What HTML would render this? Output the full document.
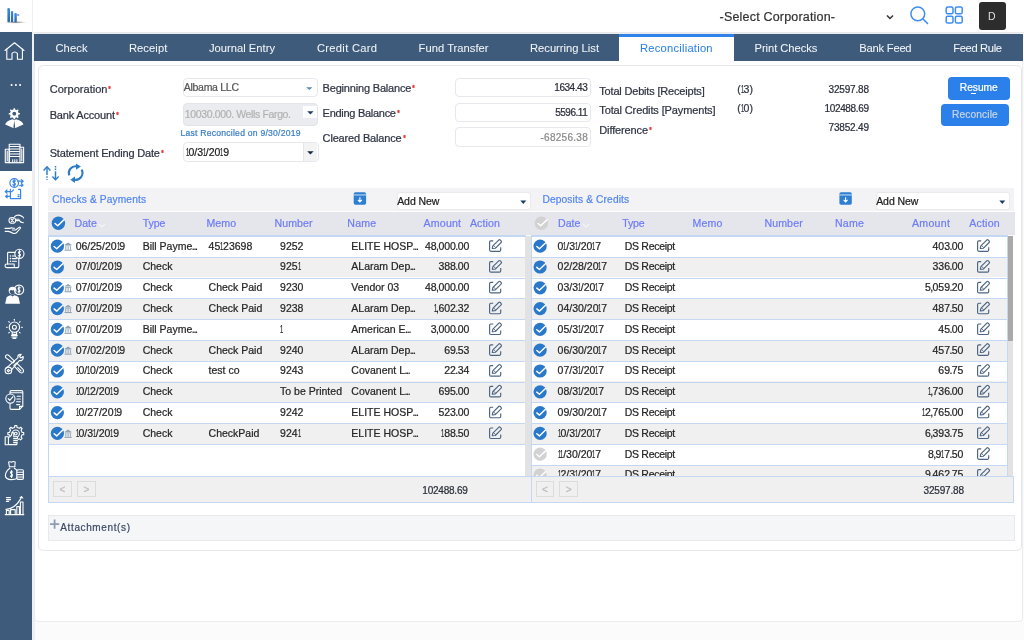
<!DOCTYPE html><html><head><meta charset="utf-8"><style>html,body{margin:0;padding:0;width:1024px;height:640px;overflow:hidden;background:#fff;font-family:"Liberation Sans", sans-serif;}.t{position:absolute;white-space:nowrap;line-height:1;-webkit-text-stroke-width:0.22px;}</style></head><body><div style="position:relative;width:1024px;height:640px;overflow:hidden;filter:blur(0.3px)"><div style="position:absolute;left:0px;top:0px;width:1024px;height:640px;background:#fbfbfb"></div><div style="position:absolute;left:0px;top:0px;width:1024px;height:33px;background:#fff;border-bottom:1px solid #e9e9ec;box-sizing:border-box"></div><div style="position:absolute;left:32px;top:0px;width:1px;height:32px;background:#f0f0f0"></div><div style="position:absolute;left:0px;top:32px;width:32px;height:608px;background:#3e5b7b"></div><div style="position:absolute;left:32px;top:32px;width:2.6000000000000014px;height:608px;background:#eeeff2"></div><div style="position:absolute;left:34.3px;top:32.6px;width:988.7px;height:589.6px;background:#fff;border:1px solid #ebecf0;border-radius:4px;box-sizing:border-box"></div><div style="position:absolute;left:34px;top:34px;width:989px;height:27px;background:#3e5b7b"></div><div style="position:absolute;left:619px;top:34px;width:115px;height:27px;background:#fff"></div><div style="position:absolute;left:619px;top:34px;width:115px;height:3px;background:#2f83e8"></div><div style="position:absolute;left:38px;top:65px;width:984px;height:486px;background:#fff;border:1px solid #e8e8e8;border-radius:5px;box-sizing:border-box"></div><svg style="position:absolute;left:0px;top:0px" width="32" height="32" viewBox="0 0 32 32">
<defs><linearGradient id="lg" x1="0" y1="0" x2="0" y2="1"><stop offset="0" stop-color="#3d8ee6"/><stop offset="1" stop-color="#2766a8"/></linearGradient>
<radialGradient id="sh"><stop offset="0" stop-color="#555" stop-opacity=".8"/><stop offset="1" stop-color="#888" stop-opacity="0"/></radialGradient></defs>
<ellipse cx="15.5" cy="22.3" rx="11.5" ry="1.4" fill="url(#sh)"/>
<rect x="7.4" y="8" width="2.6" height="14.2" rx="1.2" fill="url(#lg)"/>
<rect x="10.9" y="11" width="2.3" height="11.2" rx="1" fill="url(#lg)"/>
<rect x="14.4" y="13" width="2.4" height="9.2" rx="1" fill="url(#lg)"/>
<rect x="17" y="14" width="2.4" height="2" rx=".8" fill="#8f9cf0"/>
</svg><svg style="position:absolute;left:884px;top:12px" width="12" height="10" viewBox="0 0 12 10"><path d="M3 3.5 L6 6.5 L9 3.5" fill="none" stroke="#333" stroke-width="1.5"/></svg><svg style="position:absolute;left:906px;top:3px" width="26" height="26" viewBox="0 0 26 26"><circle cx="11.8" cy="10.8" r="6.9" fill="none" stroke="#3d8ef0" stroke-width="1.5"/><path d="M16.8 15.8 L21.5 20.5" stroke="#3d8ef0" stroke-width="1.6" stroke-linecap="round"/></svg><svg style="position:absolute;left:942px;top:3px" width="26" height="26" viewBox="0 0 26 26"><g fill="none" stroke="#3d8ef0" stroke-width="1.5">
<rect x="4.2" y="4" width="6.8" height="6.8" rx="1.6"/><rect x="13.4" y="4" width="6.8" height="6.8" rx="1.6"/>
<rect x="4.2" y="13.2" width="6.8" height="6.8" rx="1.6"/><rect x="13.4" y="13.2" width="6.8" height="6.8" rx="1.6"/></g></svg><div style="position:absolute;left:978.5px;top:2px;width:27.0px;height:27.5px;background:#2d2d2d;border-radius:3px"></div><div style="position:absolute;left:182.5px;top:77.8px;width:135.5px;height:19.700000000000003px;background:#fff;border:1px solid #e7e8ed;border-radius:4px;box-sizing:border-box"></div><svg style="position:absolute;left:306px;top:87px" width="7" height="4" viewBox="0 0 7 4"><path d="M0.2 0.2 L6.4 0.2 L3.3 3.1 Z" fill="#5a86b5"/></svg><div style="position:absolute;left:182.5px;top:102.5px;width:135.5px;height:23.0px;background:#ebecef;border:1px solid #e3e4e8;border-radius:4px;box-sizing:border-box"></div><div style="position:absolute;left:302.9px;top:105.6px;width:13.700000000000045px;height:12.5px;background:#fff"></div><svg style="position:absolute;left:306.8px;top:111px" width="7" height="4" viewBox="0 0 7 4"><path d="M0.2 0.2 L6.6 0.2 L3.4 3.4 Z" fill="#1f4060"/></svg><div style="position:absolute;left:182.5px;top:142px;width:136.0px;height:20.19999999999999px;background:#fff;border:1px solid #e7e8ed;border-radius:4px;box-sizing:border-box"></div><div style="position:absolute;left:303.4px;top:143px;width:14.100000000000023px;height:18.19999999999999px;background:#f3f3f4;border-left:1px solid #e6e6e6;box-sizing:border-box"></div><svg style="position:absolute;left:306.8px;top:150.5px" width="7" height="4" viewBox="0 0 7 4"><path d="M0.2 0.2 L6.6 0.2 L3.4 3.4 Z" fill="#152a40"/></svg><div style="position:absolute;left:455.4px;top:77.6px;width:135.60000000000002px;height:19.60000000000001px;background:#fff;border:1px solid #e7e8ed;border-radius:4px;box-sizing:border-box"></div><div style="position:absolute;left:455.4px;top:102.5px;width:135.60000000000002px;height:19.700000000000003px;background:#fff;border:1px solid #e7e8ed;border-radius:4px;box-sizing:border-box"></div><div style="position:absolute;left:455.4px;top:127.4px;width:135.60000000000002px;height:19.799999999999983px;background:#fff;border:1px solid #e7e8ed;border-radius:4px;box-sizing:border-box"></div><div style="position:absolute;left:948px;top:76.7px;width:61.5px;height:23.099999999999994px;background:#2b80ea;border-radius:4px"></div><div style="position:absolute;left:970.8px;top:92.6px;width:5.0px;height:0.8000000000000114px;background:#fff"></div><div style="position:absolute;left:940.8px;top:104px;width:67.90000000000009px;height:21.5px;background:#2b80ea;border-radius:4px"></div><svg style="position:absolute;left:40px;top:162px" width="48" height="22" viewBox="0 0 48 22"><g fill="none" stroke="#2e7cc6" stroke-width="1.45" stroke-linecap="butt">
<path d="M7 5 V17.8" stroke-dasharray="8 1.2 1.6 1.2 1.6 1.2 10"/><path d="M3.6 8.4 L7 4.8 L10.4 8.4"/>
<path d="M15.5 4 V17.8" stroke-dasharray="1.4 1.2 1.4 1.2 20"/><path d="M12.4 14.6 L15.5 17.7 L18.6 14.6"/></g>
<g fill="none" stroke="#2e7cc6" stroke-width="2.1">
<path d="M29.26 13.33 A6.8 6.8 0 0 1 36.6 4.3"/><path d="M41.54 7.6 A6.8 6.8 0 0 1 34.47 17.7"/></g>
<path d="M36 1.4 L40.9 4.6 L36 7.8 Z" fill="#2e7cc6"/><path d="M35 14.5 L30.3 17.7 L35 20.9 Z" fill="#2e7cc6"/>
</svg><div style="position:absolute;left:48px;top:188px;width:483px;height:23.19999999999999px;background:#f3f3f6"></div><div style="position:absolute;left:48px;top:212px;width:484px;height:23px;background:#e5e6eb"></div><div style="position:absolute;left:48px;top:235px;width:477.29999999999995px;height:241px;background:#fff"></div><div style="position:absolute;left:48px;top:235.8px;width:477.29999999999995px;height:20.80000000000001px;background:#fff"></div><div style="position:absolute;left:48px;top:256.6px;width:477.29999999999995px;height:20.80000000000001px;background:#f0f0f0"></div><div style="position:absolute;left:48px;top:277.40000000000003px;width:477.29999999999995px;height:20.80000000000001px;background:#fff"></div><div style="position:absolute;left:48px;top:298.20000000000005px;width:477.29999999999995px;height:20.80000000000001px;background:#f0f0f0"></div><div style="position:absolute;left:48px;top:319.0px;width:477.29999999999995px;height:20.80000000000001px;background:#fff"></div><div style="position:absolute;left:48px;top:339.8px;width:477.29999999999995px;height:20.80000000000001px;background:#f0f0f0"></div><div style="position:absolute;left:48px;top:360.6px;width:477.29999999999995px;height:20.80000000000001px;background:#fff"></div><div style="position:absolute;left:48px;top:381.4px;width:477.29999999999995px;height:20.80000000000001px;background:#f0f0f0"></div><div style="position:absolute;left:48px;top:402.20000000000005px;width:477.29999999999995px;height:20.80000000000001px;background:#fff"></div><div style="position:absolute;left:48px;top:423.0px;width:477.29999999999995px;height:20.80000000000001px;background:#f0f0f0"></div><div style="position:absolute;left:48px;top:256.70000000000005px;width:477.29999999999995px;height:1.1999999999999886px;background:#c4d8f3"></div><div style="position:absolute;left:48px;top:277.50000000000006px;width:477.29999999999995px;height:1.1999999999999886px;background:#c4d8f3"></div><div style="position:absolute;left:48px;top:298.30000000000007px;width:477.29999999999995px;height:1.1999999999999886px;background:#c4d8f3"></div><div style="position:absolute;left:48px;top:319.1000000000001px;width:477.29999999999995px;height:1.1999999999999886px;background:#c4d8f3"></div><div style="position:absolute;left:48px;top:339.90000000000003px;width:477.29999999999995px;height:1.1999999999999886px;background:#c4d8f3"></div><div style="position:absolute;left:48px;top:360.70000000000005px;width:477.29999999999995px;height:1.1999999999999886px;background:#c4d8f3"></div><div style="position:absolute;left:48px;top:381.50000000000006px;width:477.29999999999995px;height:1.1999999999999886px;background:#c4d8f3"></div><div style="position:absolute;left:48px;top:402.3px;width:477.29999999999995px;height:1.1999999999999886px;background:#c4d8f3"></div><div style="position:absolute;left:48px;top:423.1000000000001px;width:477.29999999999995px;height:1.1999999999999886px;background:#c4d8f3"></div><div style="position:absolute;left:48px;top:443.90000000000003px;width:477.29999999999995px;height:1.1999999999999886px;background:#c4d8f3"></div><div style="position:absolute;left:48px;top:235px;width:477.29999999999995px;height:1.8000000000000114px;background:#c4d8f3"></div><div style="position:absolute;left:524.8px;top:235px;width:1.0px;height:241px;background:#c4d8f3"></div><div style="position:absolute;left:525.3px;top:236px;width:5.5px;height:240px;background:#e2e2e2"></div><div style="position:absolute;left:48px;top:476px;width:483px;height:26.5px;background:#f0f0f0"></div><div style="position:absolute;left:48px;top:475.5px;width:483px;height:1.0px;background:#c4d8f3"></div><div style="position:absolute;left:48px;top:501.6px;width:483.5px;height:1.0px;background:#c4d8f3"></div><div style="position:absolute;left:48px;top:235px;width:1px;height:267.5px;background:#c4d8f3"></div><div style="position:absolute;left:530.5px;top:476px;width:1.0px;height:26.5px;background:#c4d8f3"></div><div style="position:absolute;left:53.3px;top:481px;width:18.5px;height:16.399999999999977px;border:1px solid #dcdcdc;box-sizing:border-box;background:#f0f0f0"></div><div style="position:absolute;left:77.2px;top:481px;width:18.5px;height:16.399999999999977px;border:1px solid #dcdcdc;box-sizing:border-box;background:#f0f0f0"></div><div style="position:absolute;left:396.6px;top:192px;width:134.5px;height:18.400000000000006px;background:#fff;border:1px solid #e9e9ec;border-radius:3px;box-sizing:border-box"></div><svg style="position:absolute;left:519.6px;top:200px" width="7" height="5" viewBox="0 0 7 5"><path d="M0.3 0.5 L6.3 0.5 L3.3 4 Z" fill="#1f3d63"/></svg><div style="position:absolute;left:531px;top:188px;width:482.70000000000005px;height:23.19999999999999px;background:#f3f3f6"></div><div style="position:absolute;left:531px;top:212px;width:483.70000000000005px;height:23px;background:#e5e6eb"></div><div style="position:absolute;left:531px;top:235px;width:476.4px;height:241px;background:#fff"></div><div style="position:absolute;left:531px;top:235.8px;width:476.4px;height:20.80000000000001px;background:#fff"></div><div style="position:absolute;left:531px;top:256.6px;width:476.4px;height:20.80000000000001px;background:#f0f0f0"></div><div style="position:absolute;left:531px;top:277.40000000000003px;width:476.4px;height:20.80000000000001px;background:#fff"></div><div style="position:absolute;left:531px;top:298.20000000000005px;width:476.4px;height:20.80000000000001px;background:#f0f0f0"></div><div style="position:absolute;left:531px;top:319.0px;width:476.4px;height:20.80000000000001px;background:#fff"></div><div style="position:absolute;left:531px;top:339.8px;width:476.4px;height:20.80000000000001px;background:#f0f0f0"></div><div style="position:absolute;left:531px;top:360.6px;width:476.4px;height:20.80000000000001px;background:#fff"></div><div style="position:absolute;left:531px;top:381.4px;width:476.4px;height:20.80000000000001px;background:#f0f0f0"></div><div style="position:absolute;left:531px;top:402.20000000000005px;width:476.4px;height:20.80000000000001px;background:#fff"></div><div style="position:absolute;left:531px;top:423.0px;width:476.4px;height:20.80000000000001px;background:#f0f0f0"></div><div style="position:absolute;left:531px;top:443.8px;width:476.4px;height:20.80000000000001px;background:#fff"></div><div style="position:absolute;left:531px;top:464.6px;width:476.4px;height:11.399999999999977px;background:#f0f0f0"></div><div style="position:absolute;left:531px;top:256.70000000000005px;width:476.4px;height:1.1999999999999886px;background:#c4d8f3"></div><div style="position:absolute;left:531px;top:277.50000000000006px;width:476.4px;height:1.1999999999999886px;background:#c4d8f3"></div><div style="position:absolute;left:531px;top:298.30000000000007px;width:476.4px;height:1.1999999999999886px;background:#c4d8f3"></div><div style="position:absolute;left:531px;top:319.1000000000001px;width:476.4px;height:1.1999999999999886px;background:#c4d8f3"></div><div style="position:absolute;left:531px;top:339.90000000000003px;width:476.4px;height:1.1999999999999886px;background:#c4d8f3"></div><div style="position:absolute;left:531px;top:360.70000000000005px;width:476.4px;height:1.1999999999999886px;background:#c4d8f3"></div><div style="position:absolute;left:531px;top:381.50000000000006px;width:476.4px;height:1.1999999999999886px;background:#c4d8f3"></div><div style="position:absolute;left:531px;top:402.3px;width:476.4px;height:1.1999999999999886px;background:#c4d8f3"></div><div style="position:absolute;left:531px;top:423.1000000000001px;width:476.4px;height:1.1999999999999886px;background:#c4d8f3"></div><div style="position:absolute;left:531px;top:443.90000000000003px;width:476.4px;height:1.1999999999999886px;background:#c4d8f3"></div><div style="position:absolute;left:531px;top:464.70000000000005px;width:476.4px;height:1.1999999999999886px;background:#c4d8f3"></div><div style="position:absolute;left:531px;top:235px;width:476.4px;height:1.8000000000000114px;background:#c4d8f3"></div><div style="position:absolute;left:1006.9px;top:235px;width:1.0px;height:241px;background:#c4d8f3"></div><div style="position:absolute;left:1007.6px;top:236px;width:5.0px;height:240px;background:#e2e2e2"></div><div style="position:absolute;left:1007.6px;top:236px;width:5.0px;height:105.30000000000001px;background:#a9a9a9"></div><div style="position:absolute;left:531px;top:476px;width:482.70000000000005px;height:26.5px;background:#f0f0f0"></div><div style="position:absolute;left:531px;top:475.5px;width:482.70000000000005px;height:1.0px;background:#c4d8f3"></div><div style="position:absolute;left:531px;top:501.6px;width:483.20000000000005px;height:1.0px;background:#c4d8f3"></div><div style="position:absolute;left:531px;top:235px;width:1px;height:267.5px;background:#c4d8f3"></div><div style="position:absolute;left:1013.2px;top:476px;width:1.0px;height:26.5px;background:#c4d8f3"></div><div style="position:absolute;left:535.8px;top:481px;width:18.5px;height:16.399999999999977px;border:1px solid #dcdcdc;box-sizing:border-box;background:#f0f0f0"></div><div style="position:absolute;left:559.4px;top:481px;width:18.5px;height:16.399999999999977px;border:1px solid #dcdcdc;box-sizing:border-box;background:#f0f0f0"></div><div style="position:absolute;left:875.6px;top:192px;width:134.5px;height:18.400000000000006px;background:#fff;border:1px solid #e9e9ec;border-radius:3px;box-sizing:border-box"></div><svg style="position:absolute;left:998.6px;top:200px" width="7" height="5" viewBox="0 0 7 5"><path d="M0.3 0.5 L6.3 0.5 L3.3 4 Z" fill="#1f3d63"/></svg><svg style="position:absolute;left:98.2px;top:222.5px" width="8" height="6" viewBox="0 0 8 6"><path d="M1 1 L4 4 L7 1" fill="none" stroke="#f4f5f8" stroke-width="1.1"/></svg><svg style="position:absolute;left:581.8px;top:222.5px" width="8" height="6" viewBox="0 0 8 6"><path d="M1 1 L4 4 L7 1" fill="none" stroke="#f4f5f8" stroke-width="1.1"/></svg><div style="position:absolute;left:48px;top:514.9px;width:966.8px;height:26.300000000000068px;background:#f5f6f8;border:1px solid #e8e9ec;box-sizing:border-box"></div><svg style="position:absolute;left:49px;top:519px" width="12" height="12" viewBox="0 0 12 12"><path d="M5.6 0.6 V9.8 M1 5.2 H10.2" stroke="#8d9bb2" stroke-width="1.8"/></svg><div style="position:absolute;left:0px;top:170.8px;width:32px;height:35.5px;background:#fff"></div><div class="t" style="top:11.00px;font-size:12.5px;color:#333;letter-spacing:0.186px;left:719.60px;">-Select Corporation-</div><div class="t" style="top:11.00px;font-size:10.5px;color:#e0e0e0;left:691.80px;width:600px;text-align:center;-webkit-text-stroke-width:0;">D</div><div class="t" style="top:43.00px;font-size:11.2px;color:#f2f4f7;letter-spacing:0.120px;left:55.40px;-webkit-text-stroke-width:0.05px;">Check</div><div class="t" style="top:43.00px;font-size:11.2px;color:#f2f4f7;letter-spacing:0.077px;left:128.90px;-webkit-text-stroke-width:0.05px;">Receipt</div><div class="t" style="top:43.00px;font-size:11.2px;color:#f2f4f7;letter-spacing:0.007px;left:209.00px;-webkit-text-stroke-width:0.05px;">Journal Entry</div><div class="t" style="top:43.00px;font-size:11.2px;color:#f2f4f7;letter-spacing:0.280px;left:317.00px;-webkit-text-stroke-width:0.05px;">Credit Card</div><div class="t" style="top:43.00px;font-size:11.2px;color:#f2f4f7;letter-spacing:0.029px;left:418.60px;-webkit-text-stroke-width:0.05px;">Fund Transfer</div><div class="t" style="top:43.00px;font-size:11.2px;color:#f2f4f7;left:530.00px;-webkit-text-stroke-width:0.05px;">Recurring List</div><div class="t" style="top:43.00px;font-size:11.2px;color:#2f83e8;letter-spacing:0.226px;left:640.00px;-webkit-text-stroke-width:0.05px;">Reconciliation</div><div class="t" style="top:43.00px;font-size:11.2px;color:#f2f4f7;letter-spacing:-0.047px;left:754.50px;-webkit-text-stroke-width:0.05px;">Print Checks</div><div class="t" style="top:43.00px;font-size:11.2px;color:#f2f4f7;letter-spacing:-0.226px;left:859.30px;-webkit-text-stroke-width:0.05px;">Bank Feed</div><div class="t" style="top:43.00px;font-size:11.2px;color:#f2f4f7;letter-spacing:-0.353px;left:953.20px;-webkit-text-stroke-width:0.05px;">Feed Rule</div><div class="t" style="top:84.00px;font-size:11px;color:#2e3443;letter-spacing:0.032px;left:49.70px;">Corporation</div><div class="t" style="top:110.00px;font-size:11px;color:#2e3443;letter-spacing:-0.180px;left:49.70px;">Bank Account</div><div class="t" style="top:148.00px;font-size:11px;color:#2e3443;letter-spacing:-0.173px;left:49.70px;">Statement Ending Date</div><div class="t" style="top:83.00px;font-size:11px;color:#2e3443;letter-spacing:-0.184px;left:322.60px;">Beginning Balance</div><div class="t" style="top:108.00px;font-size:11px;color:#2e3443;letter-spacing:-0.282px;left:322.60px;">Ending Balance</div><div class="t" style="top:133.00px;font-size:11px;color:#2e3443;letter-spacing:-0.160px;left:322.60px;">Cleared Balance</div><div class="t" style="top:86.00px;font-size:11px;color:#2e3443;letter-spacing:-0.184px;left:599.30px;">Total Debits [Receipts]</div><div class="t" style="top:105.00px;font-size:11px;color:#2e3443;letter-spacing:-0.131px;left:599.30px;">Total Credits [Payments]</div><div class="t" style="top:125.00px;font-size:11px;color:#2e3443;letter-spacing:-0.137px;left:599.30px;">Difference</div><div class="t" style="top:84.00px;font-size:10.5px;color:#2e3443;left:737.30px;">(<i style="font-style:normal;display:inline-block;width:2.79px;transform:scaleX(0.56);transform-origin:0 0">1</i>3)</div><div class="t" style="top:103.00px;font-size:10.5px;color:#2e3443;left:737.30px;">(<i style="font-style:normal;display:inline-block;width:2.79px;transform:scaleX(0.56);transform-origin:0 0">1</i>0)</div><div class="t" style="top:85.00px;font-size:10px;color:#2a2f3a;letter-spacing:-0.174px;right:155.17px;">32597.88</div><div class="t" style="top:104.00px;font-size:10px;color:#2a2f3a;letter-spacing:-0.348px;right:155.35px;">102488.69</div><div class="t" style="top:123.00px;font-size:10px;color:#2a2f3a;letter-spacing:-0.174px;right:155.17px;">73852.49</div><div class="t" style="top:82.00px;font-size:10.5px;color:#555;letter-spacing:-0.287px;left:183.80px;">Albama LLC</div><div class="t" style="top:109.00px;font-size:10.5px;color:#b3b3b3;letter-spacing:-0.364px;left:184.80px;">10030.000. Wells Fargo.</div><div class="t" style="top:129.00px;font-size:8.6px;color:#3b7fc7;letter-spacing:0.233px;left:180.50px;">Last Reconciled on 9/30/2019</div><div class="t" style="top:147.00px;font-size:10.5px;color:#222;left:185.60px;"><i style="font-style:normal;display:inline-block;width:2.79px;transform:scaleX(0.56);transform-origin:0 0">1</i>0/3<i style="font-style:normal;display:inline-block;width:2.79px;transform:scaleX(0.56);transform-origin:0 0">1</i>/20<i style="font-style:normal;display:inline-block;width:2.79px;transform:scaleX(0.56);transform-origin:0 0">1</i>9</div><div class="t" style="top:83.00px;font-size:10px;color:#2a2f3a;letter-spacing:-0.459px;right:436.76px;">1634.43</div><div class="t" style="top:108.00px;font-size:10px;color:#2a2f3a;letter-spacing:-0.484px;right:436.78px;">5596.11</div><div class="t" style="top:133.00px;font-size:10px;color:#8a8a8a;letter-spacing:0.269px;right:436.03px;">-68256.38</div><div class="t" style="top:83.00px;font-size:10.2px;color:#fff;letter-spacing:-0.008px;left:959.80px;">Resume</div><div class="t" style="top:110.00px;font-size:10.2px;color:#c9d3e3;letter-spacing:0.119px;left:952.00px;">Reconcile</div><div class="t" style="top:485.00px;font-size:10px;color:#bbb;left:-237.50px;width:600px;text-align:center;">&lt;</div><div class="t" style="top:485.00px;font-size:10px;color:#bbb;left:-213.60px;width:600px;text-align:center;">&gt;</div><div class="t" style="top:486.00px;font-size:10px;color:#2a2f3a;letter-spacing:-0.223px;right:556.42px;">102488.69</div><div class="t" style="top:195.00px;font-size:10.2px;color:#5487f2;letter-spacing:0.123px;left:52.30px;">Checks &amp; Payments</div><div class="t" style="top:196.00px;font-size:10.5px;color:#222;letter-spacing:-0.068px;left:397.20px;">Add New</div><div class="t" style="top:218.00px;font-size:10.6px;color:#6f7cf6;letter-spacing:-0.064px;left:74.60px;">Date</div><div class="t" style="top:218.00px;font-size:10.6px;color:#6f7cf6;letter-spacing:-0.090px;left:142.70px;">Type</div><div class="t" style="top:218.00px;font-size:10.6px;color:#6f7cf6;letter-spacing:0.121px;left:206.40px;">Memo</div><div class="t" style="top:218.00px;font-size:10.6px;color:#6f7cf6;letter-spacing:0.083px;left:274.50px;">Number</div><div class="t" style="top:218.00px;font-size:10.6px;color:#6f7cf6;letter-spacing:0.178px;left:347.30px;">Name</div><div class="t" style="top:218.00px;font-size:10.6px;color:#6f7cf6;letter-spacing:0.177px;left:423.60px;">Amount</div><div class="t" style="top:218.00px;font-size:10.6px;color:#6f7cf6;letter-spacing:0.089px;left:469.90px;">Action</div><div class="t" style="top:485.00px;font-size:10px;color:#bbb;left:245.00px;width:600px;text-align:center;">&lt;</div><div class="t" style="top:485.00px;font-size:10px;color:#bbb;left:268.60px;width:600px;text-align:center;">&gt;</div><div class="t" style="top:486.00px;font-size:10px;color:#2a2f3a;letter-spacing:-0.174px;right:60.17px;">32597.88</div><div class="t" style="top:195.00px;font-size:10.2px;color:#5487f2;letter-spacing:0.143px;left:542.40px;">Deposits &amp; Credits</div><div class="t" style="top:196.00px;font-size:10.5px;color:#222;letter-spacing:-0.068px;left:876.20px;">Add New</div><div class="t" style="top:218.00px;font-size:10.6px;color:#6f7cf6;letter-spacing:0.036px;left:558.00px;">Date</div><div class="t" style="top:218.00px;font-size:10.6px;color:#6f7cf6;letter-spacing:-0.190px;left:622.30px;">Type</div><div class="t" style="top:218.00px;font-size:10.6px;color:#6f7cf6;letter-spacing:0.188px;left:692.40px;">Memo</div><div class="t" style="top:218.00px;font-size:10.6px;color:#6f7cf6;letter-spacing:0.122px;left:764.40px;">Number</div><div class="t" style="top:218.00px;font-size:10.6px;color:#6f7cf6;letter-spacing:0.178px;left:835.00px;">Name</div><div class="t" style="top:218.00px;font-size:10.6px;color:#6f7cf6;letter-spacing:0.317px;left:911.90px;">Amount</div><div class="t" style="top:218.00px;font-size:10.6px;color:#6f7cf6;letter-spacing:0.209px;left:969.20px;">Action</div><div class="t" style="top:241.00px;font-size:10.5px;color:#262626;left:75.70px;">06/25/20<i style="font-style:normal;display:inline-block;width:2.79px;transform:scaleX(0.56);transform-origin:0 0">1</i>9</div><div class="t" style="top:241.00px;font-size:10.5px;color:#262626;left:142.70px;">Bill Payme<i style="font-style:normal;margin:0 -0.62px">.</i><i style="font-style:normal;margin:0 -0.62px">.</i><i style="font-style:normal;margin:0 -0.62px">.</i></div><div class="t" style="top:241.00px;font-size:10.5px;color:#262626;left:208.60px;">45<i style="font-style:normal;display:inline-block;width:2.79px;transform:scaleX(0.56);transform-origin:0 0">1</i>23698</div><div class="t" style="top:241.00px;font-size:10.5px;color:#262626;left:280.10px;">9252</div><div class="t" style="top:241.00px;font-size:10.5px;color:#262626;left:351.30px;">ELITE HOSP<i style="font-style:normal;margin:0 -0.62px">.</i><i style="font-style:normal;margin:0 -0.62px">.</i><i style="font-style:normal;margin:0 -0.62px">.</i></div><div class="t" style="top:241.00px;font-size:10.5px;color:#262626;right:554.70px;">48<i style="font-style:normal;margin:0 -0.62px">,</i>000<i style="font-style:normal;margin:0 -0.62px">.</i>00</div><div class="t" style="top:261.00px;font-size:10.5px;color:#262626;left:75.70px;">07/0<i style="font-style:normal;display:inline-block;width:2.79px;transform:scaleX(0.56);transform-origin:0 0">1</i>/20<i style="font-style:normal;display:inline-block;width:2.79px;transform:scaleX(0.56);transform-origin:0 0">1</i>9</div><div class="t" style="top:261.00px;font-size:10.5px;color:#262626;left:142.70px;">Check</div><div class="t" style="top:261.00px;font-size:10.5px;color:#262626;left:280.10px;">925<i style="font-style:normal;display:inline-block;width:2.79px;transform:scaleX(0.56);transform-origin:0 0">1</i></div><div class="t" style="top:261.00px;font-size:10.5px;color:#262626;left:351.30px;">ALaram Dep<i style="font-style:normal;margin:0 -0.62px">.</i><i style="font-style:normal;margin:0 -0.62px">.</i><i style="font-style:normal;margin:0 -0.62px">.</i></div><div class="t" style="top:261.00px;font-size:10.5px;color:#262626;right:554.70px;">388<i style="font-style:normal;margin:0 -0.62px">.</i>00</div><div class="t" style="top:282.00px;font-size:10.5px;color:#262626;left:75.70px;">07/0<i style="font-style:normal;display:inline-block;width:2.79px;transform:scaleX(0.56);transform-origin:0 0">1</i>/20<i style="font-style:normal;display:inline-block;width:2.79px;transform:scaleX(0.56);transform-origin:0 0">1</i>9</div><div class="t" style="top:282.00px;font-size:10.5px;color:#262626;left:142.70px;">Check</div><div class="t" style="top:282.00px;font-size:10.5px;color:#262626;left:208.60px;">Check Paid</div><div class="t" style="top:282.00px;font-size:10.5px;color:#262626;left:280.10px;">9230</div><div class="t" style="top:282.00px;font-size:10.5px;color:#262626;left:351.30px;">Vendor 03</div><div class="t" style="top:282.00px;font-size:10.5px;color:#262626;right:554.70px;">48<i style="font-style:normal;margin:0 -0.62px">,</i>000<i style="font-style:normal;margin:0 -0.62px">.</i>00</div><div class="t" style="top:303.00px;font-size:10.5px;color:#262626;left:75.70px;">07/0<i style="font-style:normal;display:inline-block;width:2.79px;transform:scaleX(0.56);transform-origin:0 0">1</i>/20<i style="font-style:normal;display:inline-block;width:2.79px;transform:scaleX(0.56);transform-origin:0 0">1</i>9</div><div class="t" style="top:303.00px;font-size:10.5px;color:#262626;left:142.70px;">Check</div><div class="t" style="top:303.00px;font-size:10.5px;color:#262626;left:208.60px;">Check Paid</div><div class="t" style="top:303.00px;font-size:10.5px;color:#262626;left:280.10px;">9238</div><div class="t" style="top:303.00px;font-size:10.5px;color:#262626;left:351.30px;">ALaram Dep<i style="font-style:normal;margin:0 -0.62px">.</i><i style="font-style:normal;margin:0 -0.62px">.</i><i style="font-style:normal;margin:0 -0.62px">.</i></div><div class="t" style="top:303.00px;font-size:10.5px;color:#262626;right:554.70px;"><i style="font-style:normal;display:inline-block;width:2.79px;transform:scaleX(0.56);transform-origin:0 0">1</i><i style="font-style:normal;margin:0 -0.62px">,</i>602<i style="font-style:normal;margin:0 -0.62px">.</i>32</div><div class="t" style="top:324.00px;font-size:10.5px;color:#262626;left:75.70px;">07/0<i style="font-style:normal;display:inline-block;width:2.79px;transform:scaleX(0.56);transform-origin:0 0">1</i>/20<i style="font-style:normal;display:inline-block;width:2.79px;transform:scaleX(0.56);transform-origin:0 0">1</i>9</div><div class="t" style="top:324.00px;font-size:10.5px;color:#262626;left:142.70px;">Bill Payme<i style="font-style:normal;margin:0 -0.62px">.</i><i style="font-style:normal;margin:0 -0.62px">.</i><i style="font-style:normal;margin:0 -0.62px">.</i></div><div class="t" style="top:324.00px;font-size:10.5px;color:#262626;left:280.10px;"><i style="font-style:normal;display:inline-block;width:2.79px;transform:scaleX(0.56);transform-origin:0 0">1</i></div><div class="t" style="top:324.00px;font-size:10.5px;color:#262626;left:351.30px;">American E<i style="font-style:normal;margin:0 -0.62px">.</i><i style="font-style:normal;margin:0 -0.62px">.</i><i style="font-style:normal;margin:0 -0.62px">.</i></div><div class="t" style="top:324.00px;font-size:10.5px;color:#262626;right:554.70px;">3<i style="font-style:normal;margin:0 -0.62px">,</i>000<i style="font-style:normal;margin:0 -0.62px">.</i>00</div><div class="t" style="top:345.00px;font-size:10.5px;color:#262626;left:75.70px;">07/02/20<i style="font-style:normal;display:inline-block;width:2.79px;transform:scaleX(0.56);transform-origin:0 0">1</i>9</div><div class="t" style="top:345.00px;font-size:10.5px;color:#262626;left:142.70px;">Check</div><div class="t" style="top:345.00px;font-size:10.5px;color:#262626;left:208.60px;">Check Paid</div><div class="t" style="top:345.00px;font-size:10.5px;color:#262626;left:280.10px;">9240</div><div class="t" style="top:345.00px;font-size:10.5px;color:#262626;left:351.30px;">ALaram Dep<i style="font-style:normal;margin:0 -0.62px">.</i><i style="font-style:normal;margin:0 -0.62px">.</i><i style="font-style:normal;margin:0 -0.62px">.</i></div><div class="t" style="top:345.00px;font-size:10.5px;color:#262626;right:554.70px;">69<i style="font-style:normal;margin:0 -0.62px">.</i>53</div><div class="t" style="top:365.00px;font-size:10.5px;color:#262626;left:75.70px;"><i style="font-style:normal;display:inline-block;width:2.79px;transform:scaleX(0.56);transform-origin:0 0">1</i>0/<i style="font-style:normal;display:inline-block;width:2.79px;transform:scaleX(0.56);transform-origin:0 0">1</i>0/20<i style="font-style:normal;display:inline-block;width:2.79px;transform:scaleX(0.56);transform-origin:0 0">1</i>9</div><div class="t" style="top:365.00px;font-size:10.5px;color:#262626;left:142.70px;">Check</div><div class="t" style="top:365.00px;font-size:10.5px;color:#262626;left:208.60px;">test co</div><div class="t" style="top:365.00px;font-size:10.5px;color:#262626;left:280.10px;">9243</div><div class="t" style="top:365.00px;font-size:10.5px;color:#262626;left:351.30px;">Covanent L<i style="font-style:normal;margin:0 -0.62px">.</i><i style="font-style:normal;margin:0 -0.62px">.</i><i style="font-style:normal;margin:0 -0.62px">.</i></div><div class="t" style="top:365.00px;font-size:10.5px;color:#262626;right:554.70px;">22<i style="font-style:normal;margin:0 -0.62px">.</i>34</div><div class="t" style="top:386.00px;font-size:10.5px;color:#262626;left:75.70px;"><i style="font-style:normal;display:inline-block;width:2.79px;transform:scaleX(0.56);transform-origin:0 0">1</i>0/<i style="font-style:normal;display:inline-block;width:2.79px;transform:scaleX(0.56);transform-origin:0 0">1</i>2/20<i style="font-style:normal;display:inline-block;width:2.79px;transform:scaleX(0.56);transform-origin:0 0">1</i>9</div><div class="t" style="top:386.00px;font-size:10.5px;color:#262626;left:142.70px;">Check</div><div class="t" style="top:386.00px;font-size:10.5px;color:#262626;left:280.10px;">To be Printed</div><div class="t" style="top:386.00px;font-size:10.5px;color:#262626;left:351.30px;">Covanent L<i style="font-style:normal;margin:0 -0.62px">.</i><i style="font-style:normal;margin:0 -0.62px">.</i><i style="font-style:normal;margin:0 -0.62px">.</i></div><div class="t" style="top:386.00px;font-size:10.5px;color:#262626;right:554.70px;">695<i style="font-style:normal;margin:0 -0.62px">.</i>00</div><div class="t" style="top:407.00px;font-size:10.5px;color:#262626;left:75.70px;"><i style="font-style:normal;display:inline-block;width:2.79px;transform:scaleX(0.56);transform-origin:0 0">1</i>0/27/20<i style="font-style:normal;display:inline-block;width:2.79px;transform:scaleX(0.56);transform-origin:0 0">1</i>9</div><div class="t" style="top:407.00px;font-size:10.5px;color:#262626;left:142.70px;">Check</div><div class="t" style="top:407.00px;font-size:10.5px;color:#262626;left:280.10px;">9242</div><div class="t" style="top:407.00px;font-size:10.5px;color:#262626;left:351.30px;">ELITE HOSP<i style="font-style:normal;margin:0 -0.62px">.</i><i style="font-style:normal;margin:0 -0.62px">.</i><i style="font-style:normal;margin:0 -0.62px">.</i></div><div class="t" style="top:407.00px;font-size:10.5px;color:#262626;right:554.70px;">523<i style="font-style:normal;margin:0 -0.62px">.</i>00</div><div class="t" style="top:428.00px;font-size:10.5px;color:#262626;left:75.70px;"><i style="font-style:normal;display:inline-block;width:2.79px;transform:scaleX(0.56);transform-origin:0 0">1</i>0/3<i style="font-style:normal;display:inline-block;width:2.79px;transform:scaleX(0.56);transform-origin:0 0">1</i>/20<i style="font-style:normal;display:inline-block;width:2.79px;transform:scaleX(0.56);transform-origin:0 0">1</i>9</div><div class="t" style="top:428.00px;font-size:10.5px;color:#262626;left:142.70px;">Check</div><div class="t" style="top:428.00px;font-size:10.5px;color:#262626;left:208.60px;">CheckPaid</div><div class="t" style="top:428.00px;font-size:10.5px;color:#262626;left:280.10px;">924<i style="font-style:normal;display:inline-block;width:2.79px;transform:scaleX(0.56);transform-origin:0 0">1</i></div><div class="t" style="top:428.00px;font-size:10.5px;color:#262626;left:351.30px;">ELITE HOSP<i style="font-style:normal;margin:0 -0.62px">.</i><i style="font-style:normal;margin:0 -0.62px">.</i><i style="font-style:normal;margin:0 -0.62px">.</i></div><div class="t" style="top:428.00px;font-size:10.5px;color:#262626;right:554.70px;"><i style="font-style:normal;display:inline-block;width:2.79px;transform:scaleX(0.56);transform-origin:0 0">1</i>88<i style="font-style:normal;margin:0 -0.62px">.</i>50</div><div class="t" style="top:241.00px;font-size:10.5px;color:#262626;left:557.60px;">0<i style="font-style:normal;display:inline-block;width:2.79px;transform:scaleX(0.56);transform-origin:0 0">1</i>/3<i style="font-style:normal;display:inline-block;width:2.79px;transform:scaleX(0.56);transform-origin:0 0">1</i>/20<i style="font-style:normal;display:inline-block;width:2.79px;transform:scaleX(0.56);transform-origin:0 0">1</i>7</div><div class="t" style="top:241.00px;font-size:10.5px;color:#262626;letter-spacing:-0.279px;left:624.70px;">DS Receipt</div><div class="t" style="top:241.00px;font-size:10.5px;color:#262626;right:60.60px;">403<i style="font-style:normal;margin:0 -0.62px">.</i>00</div><div class="t" style="top:261.00px;font-size:10.5px;color:#262626;left:557.60px;">02/28/20<i style="font-style:normal;display:inline-block;width:2.79px;transform:scaleX(0.56);transform-origin:0 0">1</i>7</div><div class="t" style="top:261.00px;font-size:10.5px;color:#262626;letter-spacing:-0.279px;left:624.70px;">DS Receipt</div><div class="t" style="top:261.00px;font-size:10.5px;color:#262626;right:60.60px;">336<i style="font-style:normal;margin:0 -0.62px">.</i>00</div><div class="t" style="top:282.00px;font-size:10.5px;color:#262626;left:557.60px;">03/3<i style="font-style:normal;display:inline-block;width:2.79px;transform:scaleX(0.56);transform-origin:0 0">1</i>/20<i style="font-style:normal;display:inline-block;width:2.79px;transform:scaleX(0.56);transform-origin:0 0">1</i>7</div><div class="t" style="top:282.00px;font-size:10.5px;color:#262626;letter-spacing:-0.279px;left:624.70px;">DS Receipt</div><div class="t" style="top:282.00px;font-size:10.5px;color:#262626;right:60.60px;">5<i style="font-style:normal;margin:0 -0.62px">,</i>059<i style="font-style:normal;margin:0 -0.62px">.</i>20</div><div class="t" style="top:303.00px;font-size:10.5px;color:#262626;left:557.60px;">04/30/20<i style="font-style:normal;display:inline-block;width:2.79px;transform:scaleX(0.56);transform-origin:0 0">1</i>7</div><div class="t" style="top:303.00px;font-size:10.5px;color:#262626;letter-spacing:-0.279px;left:624.70px;">DS Receipt</div><div class="t" style="top:303.00px;font-size:10.5px;color:#262626;right:60.60px;">487<i style="font-style:normal;margin:0 -0.62px">.</i>50</div><div class="t" style="top:324.00px;font-size:10.5px;color:#262626;left:557.60px;">05/3<i style="font-style:normal;display:inline-block;width:2.79px;transform:scaleX(0.56);transform-origin:0 0">1</i>/20<i style="font-style:normal;display:inline-block;width:2.79px;transform:scaleX(0.56);transform-origin:0 0">1</i>7</div><div class="t" style="top:324.00px;font-size:10.5px;color:#262626;letter-spacing:-0.279px;left:624.70px;">DS Receipt</div><div class="t" style="top:324.00px;font-size:10.5px;color:#262626;right:60.60px;">45<i style="font-style:normal;margin:0 -0.62px">.</i>00</div><div class="t" style="top:345.00px;font-size:10.5px;color:#262626;left:557.60px;">06/30/20<i style="font-style:normal;display:inline-block;width:2.79px;transform:scaleX(0.56);transform-origin:0 0">1</i>7</div><div class="t" style="top:345.00px;font-size:10.5px;color:#262626;letter-spacing:-0.279px;left:624.70px;">DS Receipt</div><div class="t" style="top:345.00px;font-size:10.5px;color:#262626;right:60.60px;">457<i style="font-style:normal;margin:0 -0.62px">.</i>50</div><div class="t" style="top:365.00px;font-size:10.5px;color:#262626;left:557.60px;">07/3<i style="font-style:normal;display:inline-block;width:2.79px;transform:scaleX(0.56);transform-origin:0 0">1</i>/20<i style="font-style:normal;display:inline-block;width:2.79px;transform:scaleX(0.56);transform-origin:0 0">1</i>7</div><div class="t" style="top:365.00px;font-size:10.5px;color:#262626;letter-spacing:-0.279px;left:624.70px;">DS Receipt</div><div class="t" style="top:365.00px;font-size:10.5px;color:#262626;right:60.60px;">69<i style="font-style:normal;margin:0 -0.62px">.</i>75</div><div class="t" style="top:386.00px;font-size:10.5px;color:#262626;left:557.60px;">08/3<i style="font-style:normal;display:inline-block;width:2.79px;transform:scaleX(0.56);transform-origin:0 0">1</i>/20<i style="font-style:normal;display:inline-block;width:2.79px;transform:scaleX(0.56);transform-origin:0 0">1</i>7</div><div class="t" style="top:386.00px;font-size:10.5px;color:#262626;letter-spacing:-0.279px;left:624.70px;">DS Receipt</div><div class="t" style="top:386.00px;font-size:10.5px;color:#262626;right:60.60px;"><i style="font-style:normal;display:inline-block;width:2.79px;transform:scaleX(0.56);transform-origin:0 0">1</i><i style="font-style:normal;margin:0 -0.62px">,</i>736<i style="font-style:normal;margin:0 -0.62px">.</i>00</div><div class="t" style="top:407.00px;font-size:10.5px;color:#262626;left:557.60px;">09/30/20<i style="font-style:normal;display:inline-block;width:2.79px;transform:scaleX(0.56);transform-origin:0 0">1</i>7</div><div class="t" style="top:407.00px;font-size:10.5px;color:#262626;letter-spacing:-0.279px;left:624.70px;">DS Receipt</div><div class="t" style="top:407.00px;font-size:10.5px;color:#262626;right:60.60px;"><i style="font-style:normal;display:inline-block;width:2.79px;transform:scaleX(0.56);transform-origin:0 0">1</i>2<i style="font-style:normal;margin:0 -0.62px">,</i>765<i style="font-style:normal;margin:0 -0.62px">.</i>00</div><div class="t" style="top:428.00px;font-size:10.5px;color:#262626;left:557.60px;"><i style="font-style:normal;display:inline-block;width:2.79px;transform:scaleX(0.56);transform-origin:0 0">1</i>0/3<i style="font-style:normal;display:inline-block;width:2.79px;transform:scaleX(0.56);transform-origin:0 0">1</i>/20<i style="font-style:normal;display:inline-block;width:2.79px;transform:scaleX(0.56);transform-origin:0 0">1</i>7</div><div class="t" style="top:428.00px;font-size:10.5px;color:#262626;letter-spacing:-0.279px;left:624.70px;">DS Receipt</div><div class="t" style="top:428.00px;font-size:10.5px;color:#262626;right:60.60px;">6<i style="font-style:normal;margin:0 -0.62px">,</i>393<i style="font-style:normal;margin:0 -0.62px">.</i>75</div><div class="t" style="top:449.00px;font-size:10.5px;color:#262626;left:557.60px;"><i style="font-style:normal;display:inline-block;width:2.79px;transform:scaleX(0.56);transform-origin:0 0">1</i><i style="font-style:normal;display:inline-block;width:2.79px;transform:scaleX(0.56);transform-origin:0 0">1</i>/30/20<i style="font-style:normal;display:inline-block;width:2.79px;transform:scaleX(0.56);transform-origin:0 0">1</i>7</div><div class="t" style="top:449.00px;font-size:10.5px;color:#262626;letter-spacing:-0.279px;left:624.70px;">DS Receipt</div><div class="t" style="top:449.00px;font-size:10.5px;color:#262626;right:60.60px;">8<i style="font-style:normal;margin:0 -0.62px">,</i>9<i style="font-style:normal;display:inline-block;width:2.79px;transform:scaleX(0.56);transform-origin:0 0">1</i>7<i style="font-style:normal;margin:0 -0.62px">.</i>50</div><div class="t" style="top:469.00px;font-size:10.5px;color:#262626;left:557.60px;clip-path:inset(0 0 3.50px 0);"><i style="font-style:normal;display:inline-block;width:2.79px;transform:scaleX(0.56);transform-origin:0 0">1</i>2/3<i style="font-style:normal;display:inline-block;width:2.79px;transform:scaleX(0.56);transform-origin:0 0">1</i>/20<i style="font-style:normal;display:inline-block;width:2.79px;transform:scaleX(0.56);transform-origin:0 0">1</i>7</div><div class="t" style="top:469.00px;font-size:10.5px;color:#262626;letter-spacing:-0.279px;left:624.70px;clip-path:inset(0 0 3.50px 0);">DS Receipt</div><div class="t" style="top:469.00px;font-size:10.5px;color:#262626;right:60.60px;clip-path:inset(0 0 3.50px 0);">9<i style="font-style:normal;margin:0 -0.62px">,</i>462<i style="font-style:normal;margin:0 -0.62px">.</i>75</div><div class="t" style="top:523.00px;font-size:10px;color:#3d4b66;letter-spacing:0.621px;left:60.30px;">Attachment(s)</div><svg style="position:absolute;left:107.40px;top:84.50px" width="5" height="5" viewBox="0 0 5 5"><path d="M2.5 0.9 V4.1 M1.1 1.7 L3.9 3.3 M1.1 3.3 L3.9 1.7" stroke="#ea3a35" stroke-width="0.95"/></svg><svg style="position:absolute;left:115.10px;top:110.55px" width="5" height="5" viewBox="0 0 5 5"><path d="M2.5 0.9 V4.1 M1.1 1.7 L3.9 3.3 M1.1 3.3 L3.9 1.7" stroke="#ea3a35" stroke-width="0.95"/></svg><svg style="position:absolute;left:160.00px;top:148.70px" width="5" height="5" viewBox="0 0 5 5"><path d="M2.5 0.9 V4.1 M1.1 1.7 L3.9 3.3 M1.1 3.3 L3.9 1.7" stroke="#ea3a35" stroke-width="0.95"/></svg><svg style="position:absolute;left:411.40px;top:83.80px" width="5" height="5" viewBox="0 0 5 5"><path d="M2.5 0.9 V4.1 M1.1 1.7 L3.9 3.3 M1.1 3.3 L3.9 1.7" stroke="#ea3a35" stroke-width="0.95"/></svg><svg style="position:absolute;left:396.00px;top:108.70px" width="5" height="5" viewBox="0 0 5 5"><path d="M2.5 0.9 V4.1 M1.1 1.7 L3.9 3.3 M1.1 3.3 L3.9 1.7" stroke="#ea3a35" stroke-width="0.95"/></svg><svg style="position:absolute;left:401.70px;top:133.60px" width="5" height="5" viewBox="0 0 5 5"><path d="M2.5 0.9 V4.1 M1.1 1.7 L3.9 3.3 M1.1 3.3 L3.9 1.7" stroke="#ea3a35" stroke-width="0.95"/></svg><svg style="position:absolute;left:648.00px;top:125.80px" width="5" height="5" viewBox="0 0 5 5"><path d="M2.5 0.9 V4.1 M1.1 1.7 L3.9 3.3 M1.1 3.3 L3.9 1.7" stroke="#ea3a35" stroke-width="0.95"/></svg><svg style="position:absolute;left:0;top:0" width="1024" height="640"><g transform="translate(353.7,192.3)"><rect x="0" y="0" width="12.4" height="12.4" rx="1.6" fill="#2e7fd1"/><rect x="0" y="2.2" width="12.4" height="0.9" fill="#fff" opacity=".85"/><path d="M6.2 5 V9.4 M4.2 7.6 L6.2 9.6 L8.2 7.6" stroke="#fff" stroke-width="1.1" fill="none"/></g><circle cx="58.4" cy="223.2" r="6.7" fill="#2a78c9"/><path d="M55.05 223.53 L57.73 225.75 L63.89 219.85" fill="none" stroke="#fff" stroke-width="1.47" stroke-linecap="round" stroke-linejoin="round"/></svg><svg style="position:absolute;left:0;top:0" width="1024" height="640"><g transform="translate(839.4,192.3)"><rect x="0" y="0" width="12.4" height="12.4" rx="1.6" fill="#2e7fd1"/><rect x="0" y="2.2" width="12.4" height="0.9" fill="#fff" opacity=".85"/><path d="M6.2 5 V9.4 M4.2 7.6 L6.2 9.6 L8.2 7.6" stroke="#fff" stroke-width="1.1" fill="none"/></g><circle cx="541.4" cy="223.2" r="6.7" fill="#d2d2d2"/><path d="M538.05 223.53 L540.73 225.75 L546.89 219.85" fill="none" stroke="#fff" stroke-width="1.47" stroke-linecap="round" stroke-linejoin="round"/></svg><svg style="position:absolute;left:0;top:0" width="1024" height="640"><defs><clipPath id="cb"><rect x="0" y="0" width="1024" height="476"/></clipPath></defs><g clip-path="url(#cb)"><circle cx="57.4" cy="246.2" r="6.6" fill="#2a78c9"/><path d="M54.10 246.53 L56.74 248.71 L62.81 242.90" fill="none" stroke="#fff" stroke-width="1.45" stroke-linecap="round" stroke-linejoin="round"/><g transform="translate(64.3,242.0)" fill="#8fa3b4"><path d="M0 3 L3.8 0.4 L7.6 3 Z"/><rect x="0.6" y="3.4" width="6.4" height="0.8"/><rect x="1" y="4.4" width="1" height="3"/><rect x="3.3" y="4.4" width="1" height="3"/><rect x="5.6" y="4.4" width="1" height="3"/><rect x="0.2" y="7.6" width="7.2" height="1.1"/></g><g transform="translate(489,239.2)" fill="none" stroke="#4c6483" stroke-width="1.15" stroke-linejoin="round"><path d="M4.2 1.6 H1.8 Q0.6 1.6 0.6 2.8 V10.9 Q0.6 12.1 1.8 12.1 H10.5 Q11.7 12.1 11.7 10.9 V8"/><path d="M3.3 9.3 L3.9 6.7 L9.7 0.9 Q10.5 0.1 11.3 0.9 L12.1 1.7 Q12.9 2.5 12.1 3.3 L6.3 9.1 Z"/><path d="M4.6 6.3 L6.7 8.4" stroke-width="0.9"/></g><circle cx="57.4" cy="267.0" r="6.6" fill="#2a78c9"/><path d="M54.10 267.33 L56.74 269.51 L62.81 263.70" fill="none" stroke="#fff" stroke-width="1.45" stroke-linecap="round" stroke-linejoin="round"/><g transform="translate(489,260.0)" fill="none" stroke="#4c6483" stroke-width="1.15" stroke-linejoin="round"><path d="M4.2 1.6 H1.8 Q0.6 1.6 0.6 2.8 V10.9 Q0.6 12.1 1.8 12.1 H10.5 Q11.7 12.1 11.7 10.9 V8"/><path d="M3.3 9.3 L3.9 6.7 L9.7 0.9 Q10.5 0.1 11.3 0.9 L12.1 1.7 Q12.9 2.5 12.1 3.3 L6.3 9.1 Z"/><path d="M4.6 6.3 L6.7 8.4" stroke-width="0.9"/></g><circle cx="57.4" cy="287.8" r="6.6" fill="#2a78c9"/><path d="M54.10 288.13 L56.74 290.31 L62.81 284.50" fill="none" stroke="#fff" stroke-width="1.45" stroke-linecap="round" stroke-linejoin="round"/><g transform="translate(64.3,283.6)" fill="#8fa3b4"><path d="M0 3 L3.8 0.4 L7.6 3 Z"/><rect x="0.6" y="3.4" width="6.4" height="0.8"/><rect x="1" y="4.4" width="1" height="3"/><rect x="3.3" y="4.4" width="1" height="3"/><rect x="5.6" y="4.4" width="1" height="3"/><rect x="0.2" y="7.6" width="7.2" height="1.1"/></g><g transform="translate(489,280.8)" fill="none" stroke="#4c6483" stroke-width="1.15" stroke-linejoin="round"><path d="M4.2 1.6 H1.8 Q0.6 1.6 0.6 2.8 V10.9 Q0.6 12.1 1.8 12.1 H10.5 Q11.7 12.1 11.7 10.9 V8"/><path d="M3.3 9.3 L3.9 6.7 L9.7 0.9 Q10.5 0.1 11.3 0.9 L12.1 1.7 Q12.9 2.5 12.1 3.3 L6.3 9.1 Z"/><path d="M4.6 6.3 L6.7 8.4" stroke-width="0.9"/></g><circle cx="57.4" cy="308.6" r="6.6" fill="#2a78c9"/><path d="M54.10 308.93 L56.74 311.11 L62.81 305.30" fill="none" stroke="#fff" stroke-width="1.45" stroke-linecap="round" stroke-linejoin="round"/><g transform="translate(64.3,304.40000000000003)" fill="#8fa3b4"><path d="M0 3 L3.8 0.4 L7.6 3 Z"/><rect x="0.6" y="3.4" width="6.4" height="0.8"/><rect x="1" y="4.4" width="1" height="3"/><rect x="3.3" y="4.4" width="1" height="3"/><rect x="5.6" y="4.4" width="1" height="3"/><rect x="0.2" y="7.6" width="7.2" height="1.1"/></g><g transform="translate(489,301.6)" fill="none" stroke="#4c6483" stroke-width="1.15" stroke-linejoin="round"><path d="M4.2 1.6 H1.8 Q0.6 1.6 0.6 2.8 V10.9 Q0.6 12.1 1.8 12.1 H10.5 Q11.7 12.1 11.7 10.9 V8"/><path d="M3.3 9.3 L3.9 6.7 L9.7 0.9 Q10.5 0.1 11.3 0.9 L12.1 1.7 Q12.9 2.5 12.1 3.3 L6.3 9.1 Z"/><path d="M4.6 6.3 L6.7 8.4" stroke-width="0.9"/></g><circle cx="57.4" cy="329.4" r="6.6" fill="#2a78c9"/><path d="M54.10 329.73 L56.74 331.91 L62.81 326.10" fill="none" stroke="#fff" stroke-width="1.45" stroke-linecap="round" stroke-linejoin="round"/><g transform="translate(64.3,325.2)" fill="#8fa3b4"><path d="M0 3 L3.8 0.4 L7.6 3 Z"/><rect x="0.6" y="3.4" width="6.4" height="0.8"/><rect x="1" y="4.4" width="1" height="3"/><rect x="3.3" y="4.4" width="1" height="3"/><rect x="5.6" y="4.4" width="1" height="3"/><rect x="0.2" y="7.6" width="7.2" height="1.1"/></g><g transform="translate(489,322.4)" fill="none" stroke="#4c6483" stroke-width="1.15" stroke-linejoin="round"><path d="M4.2 1.6 H1.8 Q0.6 1.6 0.6 2.8 V10.9 Q0.6 12.1 1.8 12.1 H10.5 Q11.7 12.1 11.7 10.9 V8"/><path d="M3.3 9.3 L3.9 6.7 L9.7 0.9 Q10.5 0.1 11.3 0.9 L12.1 1.7 Q12.9 2.5 12.1 3.3 L6.3 9.1 Z"/><path d="M4.6 6.3 L6.7 8.4" stroke-width="0.9"/></g><circle cx="57.4" cy="350.2" r="6.6" fill="#2a78c9"/><path d="M54.10 350.53 L56.74 352.71 L62.81 346.90" fill="none" stroke="#fff" stroke-width="1.45" stroke-linecap="round" stroke-linejoin="round"/><g transform="translate(64.3,346.0)" fill="#8fa3b4"><path d="M0 3 L3.8 0.4 L7.6 3 Z"/><rect x="0.6" y="3.4" width="6.4" height="0.8"/><rect x="1" y="4.4" width="1" height="3"/><rect x="3.3" y="4.4" width="1" height="3"/><rect x="5.6" y="4.4" width="1" height="3"/><rect x="0.2" y="7.6" width="7.2" height="1.1"/></g><g transform="translate(489,343.2)" fill="none" stroke="#4c6483" stroke-width="1.15" stroke-linejoin="round"><path d="M4.2 1.6 H1.8 Q0.6 1.6 0.6 2.8 V10.9 Q0.6 12.1 1.8 12.1 H10.5 Q11.7 12.1 11.7 10.9 V8"/><path d="M3.3 9.3 L3.9 6.7 L9.7 0.9 Q10.5 0.1 11.3 0.9 L12.1 1.7 Q12.9 2.5 12.1 3.3 L6.3 9.1 Z"/><path d="M4.6 6.3 L6.7 8.4" stroke-width="0.9"/></g><circle cx="57.4" cy="371.0" r="6.6" fill="#2a78c9"/><path d="M54.10 371.33 L56.74 373.51 L62.81 367.70" fill="none" stroke="#fff" stroke-width="1.45" stroke-linecap="round" stroke-linejoin="round"/><g transform="translate(489,364.0)" fill="none" stroke="#4c6483" stroke-width="1.15" stroke-linejoin="round"><path d="M4.2 1.6 H1.8 Q0.6 1.6 0.6 2.8 V10.9 Q0.6 12.1 1.8 12.1 H10.5 Q11.7 12.1 11.7 10.9 V8"/><path d="M3.3 9.3 L3.9 6.7 L9.7 0.9 Q10.5 0.1 11.3 0.9 L12.1 1.7 Q12.9 2.5 12.1 3.3 L6.3 9.1 Z"/><path d="M4.6 6.3 L6.7 8.4" stroke-width="0.9"/></g><circle cx="57.4" cy="391.79999999999995" r="6.6" fill="#2a78c9"/><path d="M54.10 392.13 L56.74 394.31 L62.81 388.50" fill="none" stroke="#fff" stroke-width="1.45" stroke-linecap="round" stroke-linejoin="round"/><g transform="translate(489,384.79999999999995)" fill="none" stroke="#4c6483" stroke-width="1.15" stroke-linejoin="round"><path d="M4.2 1.6 H1.8 Q0.6 1.6 0.6 2.8 V10.9 Q0.6 12.1 1.8 12.1 H10.5 Q11.7 12.1 11.7 10.9 V8"/><path d="M3.3 9.3 L3.9 6.7 L9.7 0.9 Q10.5 0.1 11.3 0.9 L12.1 1.7 Q12.9 2.5 12.1 3.3 L6.3 9.1 Z"/><path d="M4.6 6.3 L6.7 8.4" stroke-width="0.9"/></g><circle cx="57.4" cy="412.6" r="6.6" fill="#2a78c9"/><path d="M54.10 412.93 L56.74 415.11 L62.81 409.30" fill="none" stroke="#fff" stroke-width="1.45" stroke-linecap="round" stroke-linejoin="round"/><g transform="translate(489,405.6)" fill="none" stroke="#4c6483" stroke-width="1.15" stroke-linejoin="round"><path d="M4.2 1.6 H1.8 Q0.6 1.6 0.6 2.8 V10.9 Q0.6 12.1 1.8 12.1 H10.5 Q11.7 12.1 11.7 10.9 V8"/><path d="M3.3 9.3 L3.9 6.7 L9.7 0.9 Q10.5 0.1 11.3 0.9 L12.1 1.7 Q12.9 2.5 12.1 3.3 L6.3 9.1 Z"/><path d="M4.6 6.3 L6.7 8.4" stroke-width="0.9"/></g><circle cx="57.4" cy="433.4" r="6.6" fill="#2a78c9"/><path d="M54.10 433.73 L56.74 435.91 L62.81 430.10" fill="none" stroke="#fff" stroke-width="1.45" stroke-linecap="round" stroke-linejoin="round"/><g transform="translate(64.3,429.2)" fill="#8fa3b4"><path d="M0 3 L3.8 0.4 L7.6 3 Z"/><rect x="0.6" y="3.4" width="6.4" height="0.8"/><rect x="1" y="4.4" width="1" height="3"/><rect x="3.3" y="4.4" width="1" height="3"/><rect x="5.6" y="4.4" width="1" height="3"/><rect x="0.2" y="7.6" width="7.2" height="1.1"/></g><g transform="translate(489,426.4)" fill="none" stroke="#4c6483" stroke-width="1.15" stroke-linejoin="round"><path d="M4.2 1.6 H1.8 Q0.6 1.6 0.6 2.8 V10.9 Q0.6 12.1 1.8 12.1 H10.5 Q11.7 12.1 11.7 10.9 V8"/><path d="M3.3 9.3 L3.9 6.7 L9.7 0.9 Q10.5 0.1 11.3 0.9 L12.1 1.7 Q12.9 2.5 12.1 3.3 L6.3 9.1 Z"/><path d="M4.6 6.3 L6.7 8.4" stroke-width="0.9"/></g><circle cx="540.1" cy="246.2" r="6.6" fill="#2a78c9"/><path d="M536.80 246.53 L539.44 248.71 L545.51 242.90" fill="none" stroke="#fff" stroke-width="1.45" stroke-linecap="round" stroke-linejoin="round"/><g transform="translate(977,239.2)" fill="none" stroke="#4c6483" stroke-width="1.15" stroke-linejoin="round"><path d="M4.2 1.6 H1.8 Q0.6 1.6 0.6 2.8 V10.9 Q0.6 12.1 1.8 12.1 H10.5 Q11.7 12.1 11.7 10.9 V8"/><path d="M3.3 9.3 L3.9 6.7 L9.7 0.9 Q10.5 0.1 11.3 0.9 L12.1 1.7 Q12.9 2.5 12.1 3.3 L6.3 9.1 Z"/><path d="M4.6 6.3 L6.7 8.4" stroke-width="0.9"/></g><circle cx="540.1" cy="267.0" r="6.6" fill="#2a78c9"/><path d="M536.80 267.33 L539.44 269.51 L545.51 263.70" fill="none" stroke="#fff" stroke-width="1.45" stroke-linecap="round" stroke-linejoin="round"/><g transform="translate(977,260.0)" fill="none" stroke="#4c6483" stroke-width="1.15" stroke-linejoin="round"><path d="M4.2 1.6 H1.8 Q0.6 1.6 0.6 2.8 V10.9 Q0.6 12.1 1.8 12.1 H10.5 Q11.7 12.1 11.7 10.9 V8"/><path d="M3.3 9.3 L3.9 6.7 L9.7 0.9 Q10.5 0.1 11.3 0.9 L12.1 1.7 Q12.9 2.5 12.1 3.3 L6.3 9.1 Z"/><path d="M4.6 6.3 L6.7 8.4" stroke-width="0.9"/></g><circle cx="540.1" cy="287.8" r="6.6" fill="#2a78c9"/><path d="M536.80 288.13 L539.44 290.31 L545.51 284.50" fill="none" stroke="#fff" stroke-width="1.45" stroke-linecap="round" stroke-linejoin="round"/><g transform="translate(977,280.8)" fill="none" stroke="#4c6483" stroke-width="1.15" stroke-linejoin="round"><path d="M4.2 1.6 H1.8 Q0.6 1.6 0.6 2.8 V10.9 Q0.6 12.1 1.8 12.1 H10.5 Q11.7 12.1 11.7 10.9 V8"/><path d="M3.3 9.3 L3.9 6.7 L9.7 0.9 Q10.5 0.1 11.3 0.9 L12.1 1.7 Q12.9 2.5 12.1 3.3 L6.3 9.1 Z"/><path d="M4.6 6.3 L6.7 8.4" stroke-width="0.9"/></g><circle cx="540.1" cy="308.6" r="6.6" fill="#2a78c9"/><path d="M536.80 308.93 L539.44 311.11 L545.51 305.30" fill="none" stroke="#fff" stroke-width="1.45" stroke-linecap="round" stroke-linejoin="round"/><g transform="translate(977,301.6)" fill="none" stroke="#4c6483" stroke-width="1.15" stroke-linejoin="round"><path d="M4.2 1.6 H1.8 Q0.6 1.6 0.6 2.8 V10.9 Q0.6 12.1 1.8 12.1 H10.5 Q11.7 12.1 11.7 10.9 V8"/><path d="M3.3 9.3 L3.9 6.7 L9.7 0.9 Q10.5 0.1 11.3 0.9 L12.1 1.7 Q12.9 2.5 12.1 3.3 L6.3 9.1 Z"/><path d="M4.6 6.3 L6.7 8.4" stroke-width="0.9"/></g><circle cx="540.1" cy="329.4" r="6.6" fill="#2a78c9"/><path d="M536.80 329.73 L539.44 331.91 L545.51 326.10" fill="none" stroke="#fff" stroke-width="1.45" stroke-linecap="round" stroke-linejoin="round"/><g transform="translate(977,322.4)" fill="none" stroke="#4c6483" stroke-width="1.15" stroke-linejoin="round"><path d="M4.2 1.6 H1.8 Q0.6 1.6 0.6 2.8 V10.9 Q0.6 12.1 1.8 12.1 H10.5 Q11.7 12.1 11.7 10.9 V8"/><path d="M3.3 9.3 L3.9 6.7 L9.7 0.9 Q10.5 0.1 11.3 0.9 L12.1 1.7 Q12.9 2.5 12.1 3.3 L6.3 9.1 Z"/><path d="M4.6 6.3 L6.7 8.4" stroke-width="0.9"/></g><circle cx="540.1" cy="350.2" r="6.6" fill="#2a78c9"/><path d="M536.80 350.53 L539.44 352.71 L545.51 346.90" fill="none" stroke="#fff" stroke-width="1.45" stroke-linecap="round" stroke-linejoin="round"/><g transform="translate(977,343.2)" fill="none" stroke="#4c6483" stroke-width="1.15" stroke-linejoin="round"><path d="M4.2 1.6 H1.8 Q0.6 1.6 0.6 2.8 V10.9 Q0.6 12.1 1.8 12.1 H10.5 Q11.7 12.1 11.7 10.9 V8"/><path d="M3.3 9.3 L3.9 6.7 L9.7 0.9 Q10.5 0.1 11.3 0.9 L12.1 1.7 Q12.9 2.5 12.1 3.3 L6.3 9.1 Z"/><path d="M4.6 6.3 L6.7 8.4" stroke-width="0.9"/></g><circle cx="540.1" cy="371.0" r="6.6" fill="#2a78c9"/><path d="M536.80 371.33 L539.44 373.51 L545.51 367.70" fill="none" stroke="#fff" stroke-width="1.45" stroke-linecap="round" stroke-linejoin="round"/><g transform="translate(977,364.0)" fill="none" stroke="#4c6483" stroke-width="1.15" stroke-linejoin="round"><path d="M4.2 1.6 H1.8 Q0.6 1.6 0.6 2.8 V10.9 Q0.6 12.1 1.8 12.1 H10.5 Q11.7 12.1 11.7 10.9 V8"/><path d="M3.3 9.3 L3.9 6.7 L9.7 0.9 Q10.5 0.1 11.3 0.9 L12.1 1.7 Q12.9 2.5 12.1 3.3 L6.3 9.1 Z"/><path d="M4.6 6.3 L6.7 8.4" stroke-width="0.9"/></g><circle cx="540.1" cy="391.79999999999995" r="6.6" fill="#2a78c9"/><path d="M536.80 392.13 L539.44 394.31 L545.51 388.50" fill="none" stroke="#fff" stroke-width="1.45" stroke-linecap="round" stroke-linejoin="round"/><g transform="translate(977,384.79999999999995)" fill="none" stroke="#4c6483" stroke-width="1.15" stroke-linejoin="round"><path d="M4.2 1.6 H1.8 Q0.6 1.6 0.6 2.8 V10.9 Q0.6 12.1 1.8 12.1 H10.5 Q11.7 12.1 11.7 10.9 V8"/><path d="M3.3 9.3 L3.9 6.7 L9.7 0.9 Q10.5 0.1 11.3 0.9 L12.1 1.7 Q12.9 2.5 12.1 3.3 L6.3 9.1 Z"/><path d="M4.6 6.3 L6.7 8.4" stroke-width="0.9"/></g><circle cx="540.1" cy="412.6" r="6.6" fill="#2a78c9"/><path d="M536.80 412.93 L539.44 415.11 L545.51 409.30" fill="none" stroke="#fff" stroke-width="1.45" stroke-linecap="round" stroke-linejoin="round"/><g transform="translate(977,405.6)" fill="none" stroke="#4c6483" stroke-width="1.15" stroke-linejoin="round"><path d="M4.2 1.6 H1.8 Q0.6 1.6 0.6 2.8 V10.9 Q0.6 12.1 1.8 12.1 H10.5 Q11.7 12.1 11.7 10.9 V8"/><path d="M3.3 9.3 L3.9 6.7 L9.7 0.9 Q10.5 0.1 11.3 0.9 L12.1 1.7 Q12.9 2.5 12.1 3.3 L6.3 9.1 Z"/><path d="M4.6 6.3 L6.7 8.4" stroke-width="0.9"/></g><circle cx="540.1" cy="433.4" r="6.6" fill="#2a78c9"/><path d="M536.80 433.73 L539.44 435.91 L545.51 430.10" fill="none" stroke="#fff" stroke-width="1.45" stroke-linecap="round" stroke-linejoin="round"/><g transform="translate(977,426.4)" fill="none" stroke="#4c6483" stroke-width="1.15" stroke-linejoin="round"><path d="M4.2 1.6 H1.8 Q0.6 1.6 0.6 2.8 V10.9 Q0.6 12.1 1.8 12.1 H10.5 Q11.7 12.1 11.7 10.9 V8"/><path d="M3.3 9.3 L3.9 6.7 L9.7 0.9 Q10.5 0.1 11.3 0.9 L12.1 1.7 Q12.9 2.5 12.1 3.3 L6.3 9.1 Z"/><path d="M4.6 6.3 L6.7 8.4" stroke-width="0.9"/></g><circle cx="540.1" cy="454.2" r="6.6" fill="#d2d2d2"/><path d="M536.80 454.53 L539.44 456.71 L545.51 450.90" fill="none" stroke="#fff" stroke-width="1.45" stroke-linecap="round" stroke-linejoin="round"/><g transform="translate(977,447.2)" fill="none" stroke="#4c6483" stroke-width="1.15" stroke-linejoin="round"><path d="M4.2 1.6 H1.8 Q0.6 1.6 0.6 2.8 V10.9 Q0.6 12.1 1.8 12.1 H10.5 Q11.7 12.1 11.7 10.9 V8"/><path d="M3.3 9.3 L3.9 6.7 L9.7 0.9 Q10.5 0.1 11.3 0.9 L12.1 1.7 Q12.9 2.5 12.1 3.3 L6.3 9.1 Z"/><path d="M4.6 6.3 L6.7 8.4" stroke-width="0.9"/></g><circle cx="540.1" cy="475.0" r="6.6" fill="#d2d2d2"/><path d="M536.80 475.33 L539.44 477.51 L545.51 471.70" fill="none" stroke="#fff" stroke-width="1.45" stroke-linecap="round" stroke-linejoin="round"/><g transform="translate(977,468.0)" fill="none" stroke="#4c6483" stroke-width="1.15" stroke-linejoin="round"><path d="M4.2 1.6 H1.8 Q0.6 1.6 0.6 2.8 V10.9 Q0.6 12.1 1.8 12.1 H10.5 Q11.7 12.1 11.7 10.9 V8"/><path d="M3.3 9.3 L3.9 6.7 L9.7 0.9 Q10.5 0.1 11.3 0.9 L12.1 1.7 Q12.9 2.5 12.1 3.3 L6.3 9.1 Z"/><path d="M4.6 6.3 L6.7 8.4" stroke-width="0.9"/></g></g></svg><svg style="position:absolute;left:0;top:32px" width="32" height="32" viewBox="0 0 32 32"><g fill="none" stroke="#fff" stroke-width="1.1" stroke-linejoin="round" stroke-linecap="round" stroke-width="1.25"><path d="M5 18.5 L14.5 10.8 L24 18.5"/><path d="M6.8 17 V27.3 H12 V21.3 Q14.6 18.6 17.4 21.3 V27.3 H22.4 V17"/></g></svg><svg style="position:absolute;left:0;top:69px" width="32" height="32" viewBox="0 0 32 32"><g fill="#fff"><circle cx="11.6" cy="16" r="1.05"/><circle cx="15.9" cy="16" r="1.05"/><circle cx="20.1" cy="16" r="1.05"/></g></svg><svg style="position:absolute;left:0;top:102px" width="32" height="32" viewBox="0 0 32 32"><path d="M12.79 7.68 L13.49 7.48 L13.56 6.15 L15.04 6.15 L15.11 7.48 L16.08 7.78 L16.71 8.14 L17.70 7.25 L18.75 8.30 L17.86 9.29 L18.32 10.19 L18.52 10.89 L19.85 10.96 L19.85 12.44 L18.52 12.51 L18.22 13.48 L17.86 14.11 L18.75 15.10 L17.70 16.15 L16.71 15.26 L15.81 15.72 L15.11 15.92 L15.04 17.25 L13.56 17.25 L13.49 15.92 L12.52 15.62 L11.89 15.26 L10.90 16.15 L9.85 15.10 L10.74 14.11 L10.28 13.21 L10.08 12.51 L8.75 12.44 L8.75 10.96 L10.08 10.89 L10.38 9.92 L10.74 9.29 L9.85 8.30 L10.90 7.25 L11.89 8.14 Z" fill="#fff"/><circle cx="14.3" cy="11.7" r="1.9" fill="#3e5b7b"/><path d="M5.2 22.6 Q5.8 19.2 12.6 17.2 L14.3 18.3 L16 17.2 Q22.8 19.2 23.4 22.6 L15.4 25.9 L13.2 25.9 Z" fill="#fff"/><path d="M14.3 18.6 L13.4 25.4 L14.3 26.2 L15.2 25.4 Z" fill="#3e5b7b"/></svg><svg style="position:absolute;left:0;top:137px" width="32" height="32" viewBox="0 0 32 32"><g fill="none" stroke="#fff" stroke-width="1.1" stroke-linejoin="round" stroke-linecap="round" stroke-width="0.9"><rect x="9.2" y="7.2" width="10.8" height="18.6"/><path d="M5.3 12.2 H9.2 V25.6 H5.3 Z"/><path d="M20 10.2 H23.6 V25.6 H20"/><path d="M9.6 9.5 H19.6"/><path d="M9.6 12 H19.6"/><path d="M9.6 14.5 H19.6"/><path d="M9.6 17 H19.6"/><path d="M9.6 19.5 H19.6"/><path d="M7.2 14 V24 M21.8 12 V24"/></g><rect x="10.4" y="21.2" width="8.6" height="4.2" fill="#3e5b7b"/><g fill="#fff"><rect x="12.2" y="22.3" width="1" height="3.4"/><rect x="14.3" y="22.3" width="1" height="3.4"/><rect x="16.4" y="22.3" width="1" height="3.4"/><rect x="9.2" y="25.2" width="10.8" height="0.9"/></g></svg><svg style="position:absolute;left:0;top:171px" width="32" height="32" viewBox="0 0 32 32"><g fill="none" stroke="#3a87e8" stroke-width="1.2" stroke-linecap="round" stroke-linejoin="round"><circle cx="14.2" cy="12" r="4.3"/><path d="M15.6 10 Q14.2 9 13 10.2 Q13 11.6 14.4 12 Q15.8 12.6 15.2 13.8 Q14 14.8 12.8 13.8 M14.2 8.4 V15.6"/><path d="M17.6 10.2 H23.2 M21.4 8.6 L23.2 10.2 L21.4 11.8 M19.8 14.6 L22.8 14 M21.6 12.8 L23 14 L21.6 15.4"/><path d="M10.4 18.4 V27.6 H20.6 V18.4 H18.6"/><path d="M18 23.8 H19.2 M18 25.6 H19.2"/><path d="M5.2 20.6 H11.8 L13.6 18.8 M7 19 L5.2 20.6 L7 22.2 M5.6 25.4 H10.4 M7.2 24 L5.6 25.4 L7.2 26.8"/></g></svg><svg style="position:absolute;left:0;top:207px" width="32" height="32" viewBox="0 0 32 32"><g fill="none" stroke="#fff" stroke-width="1.1" stroke-linejoin="round" stroke-linecap="round" stroke-width="0.95"><ellipse cx="12.3" cy="13.4" rx="3.3" ry="2.9"/><path d="M11 11.8 L13.6 14.8 M13.4 11.6 L11.2 15"/><path d="M14.6 9.6 Q17.5 6.8 22.2 9.4 Q23.5 10.4 23.6 11"/><path d="M15.8 12.2 H19 M15.6 13.6 H18.4"/><path d="M19.2 13.4 Q20.6 15.6 23.4 15.8"/><path d="M5 21.4 H9.2 Q11.2 20.4 13.6 21.2 H14.6 M5.2 24.4 H8.4 Q10.6 25 13.4 26.4 Q15 26.8 16.4 25.8 L20.6 21 Q20.4 19.6 19 20.4 L15.6 23 H12.4"/></g></svg><svg style="position:absolute;left:0;top:242px" width="32" height="32" viewBox="0 0 32 32"><g fill="none" stroke="#fff" stroke-width="1.1" stroke-linejoin="round" stroke-linecap="round" stroke-width="1"><path d="M7.6 22 V11.2 Q7.6 10.4 8.4 10.4 H15.2"/><path d="M18.8 16.4 V24.6 Q18.8 25.6 17.6 25.6 H6.8 Q5 25.6 5 23.8 Q5 22 6.8 22 H14.2 V24.4 Q14.2 25.6 15.4 25.6"/><circle cx="19.4" cy="11.8" r="4.6"/><path d="M20.6 9.8 Q19.4 9.2 18.6 10 Q18.2 11.2 19.4 11.8 Q20.8 12.4 20.2 13.6 Q19.4 14.4 18.4 13.8 M19.4 8.6 V15.2"/><path d="M12.4 14 H15 M12.4 16.6 H16.4 M12.4 19.2 H16.4"/></g><g fill="#fff"><circle cx="10.4" cy="14" r="0.8"/><circle cx="10.4" cy="16.6" r="0.8"/><circle cx="10.4" cy="19.2" r="0.8"/></g></svg><svg style="position:absolute;left:0;top:278px" width="32" height="32" viewBox="0 0 32 32"><g fill="#fff"><circle cx="12.6" cy="12.6" r="3.9"/><path d="M5.2 25.8 L6.6 19.2 Q8 17.6 10.8 17.2 L12.6 18.6 L14.4 17.2 Q17.2 17.6 18.6 19.2 L20 25.8 Z"/></g><path d="M9.6 13.2 Q10.6 11.4 12.6 12.4 Q14.4 11.4 15.6 13.2 Q15.2 16.2 12.6 16.4 Q10 16.2 9.6 13.2 Z" fill="#3e5b7b"/><g fill="none" stroke="#fff" stroke-width="1.1" stroke-linejoin="round" stroke-linecap="round" stroke-width="1"><circle cx="19" cy="11.8" r="4.7"/><path d="M20.2 9.8 Q19 9.2 18.2 10 Q17.8 11.2 19 11.8 Q20.4 12.4 19.8 13.6 Q19 14.4 18 13.8 M19 8.6 V15.2"/></g></svg><svg style="position:absolute;left:0;top:313px" width="32" height="32" viewBox="0 0 32 32"><g fill="none" stroke="#fff" stroke-width="1.1" stroke-linejoin="round" stroke-linecap="round" stroke-width="1"><circle cx="14.4" cy="14.2" r="5.2"/><circle cx="14.4" cy="14.2" r="2"/><path d="M14.4 6.3 V7.2" transform="rotate(0 14.4 14.3)"/><path d="M14.4 6.3 V7.2" transform="rotate(45 14.4 14.3)"/><path d="M14.4 6.3 V7.2" transform="rotate(90 14.4 14.3)"/><path d="M14.4 6.3 V7.2" transform="rotate(135 14.4 14.3)"/><path d="M14.4 6.3 V7.2" transform="rotate(225 14.4 14.3)"/><path d="M14.4 6.3 V7.2" transform="rotate(270 14.4 14.3)"/><path d="M14.4 6.3 V7.2" transform="rotate(315 14.4 14.3)"/><path d="M12.2 19.4 V21.4 H16.6 V19.4"/><path d="M11.6 22.4 H17.2 M11.8 24 H17 M13 25.4 H15.8"/></g></svg><svg style="position:absolute;left:0;top:348px" width="32" height="32" viewBox="0 0 32 32"><g fill="none" stroke="#fff" stroke-width="1.1" stroke-linejoin="round" stroke-linecap="round" stroke-width="0.95"><path d="M5.6 9.6 Q5 7.6 6.4 6.9 Q7.8 6.4 9 7.6 L14.6 13.4 L13 15 Z"/><path d="M15.2 16.2 L16.6 14.8 L23 21.4 Q24.2 23 23 24.4 Q21.6 25.6 20 24.4 L13.8 17.6 Z"/><path d="M17.8 19.6 L21 22.8"/><path d="M6.6 19.8 L18 9.6 Q17.4 7.2 19.4 6.6 L21.2 6.4 L19.6 8.6 L20.8 10 L23.2 8.6 Q23.6 11.6 21.4 12.6 Q20.4 12.8 19.6 12.4 L10.8 22.6"/><circle cx="8.4" cy="22.4" r="3.3"/><path d="M7.2 22.6 L8.4 21.4 L9.6 22.6 L8.4 23.8 Z"/></g></svg><svg style="position:absolute;left:0;top:384px" width="32" height="32" viewBox="0 0 32 32"><g fill="none" stroke="#fff" stroke-width="1.1" stroke-linejoin="round" stroke-linecap="round" stroke-width="1"><path d="M10 9.4 V7.8 Q10 6.6 11.2 6.6 H21.6 Q22.8 6.6 22.8 7.8 V22.2 L19.6 25.4 H11.2 Q10 25.4 10 24.2 V19.6"/><path d="M10.4 8.8 H22.4"/><circle cx="10.4" cy="14.6" r="4.6"/><path d="M8.2 14.6 L9.8 16.4 L13 12.6"/><path d="M17.2 12.2 H20.4 M16.8 15 H20.4 M16.6 17.8 H20.4 M16.6 20.6 H19.6"/><path d="M19.6 25.2 V22.4 H22.6"/></g></svg><svg style="position:absolute;left:0;top:419px" width="32" height="32" viewBox="0 0 32 32"><g fill="none" stroke="#fff" stroke-width="1.1" stroke-linejoin="round" stroke-linecap="round" stroke-width="0.95"><path d="M13.58 8.70 L14.61 8.41 L14.75 6.67 L16.85 6.67 L16.99 8.41 L18.40 8.86 L19.33 9.39 L20.66 8.25 L22.15 9.74 L21.01 11.07 L21.70 12.38 L21.99 13.41 L23.73 13.55 L23.73 15.65 L21.99 15.79 L21.54 17.20 L21.01 18.13 L22.15 19.46 L20.66 20.95 L19.33 19.81 L18.02 20.50 L16.99 20.79 L16.85 22.53 L14.75 22.53 L14.61 20.79 L13.20 20.34 L12.27 19.81 L10.94 20.95 L9.45 19.46 L10.59 18.13 L9.90 16.82 L9.61 15.79 L7.87 15.65 L7.87 13.55 L9.61 13.41 L10.06 12.00 L10.59 11.07 L9.45 9.74 L10.94 8.25 L12.27 9.39 Z"/><circle cx="15.8" cy="14.6" r="3.6"/><circle cx="15.8" cy="14.6" r="1.4"/></g><path d="M8.8 18.4 L11.6 16.2 L12.4 13.4 Q14 13.2 14 15 V17.6 H17.6 V25.6 H8.8 Z" fill="#3e5b7b"/><g fill="none" stroke="#fff" stroke-width="1.1" stroke-linejoin="round" stroke-linecap="round" stroke-width="0.95"><path d="M5.2 17.8 H8.4 V25.8 H5.2 Z"/><path d="M8.6 18.6 L11.4 16.4 L12.2 13.4 Q13.8 13.2 13.8 15 V17.8 H17.2 Q17.8 18.4 17.2 19.4 M13.6 19.6 H17.4 M13.6 21.6 H17.4 M13.6 23.6 H17.2 L16.8 25.6 H9.4 L8.6 25"/></g></svg><svg style="position:absolute;left:0;top:454px" width="32" height="32" viewBox="0 0 32 32"><g fill="none" stroke="#fff" stroke-width="1.1" stroke-linejoin="round" stroke-linecap="round" stroke-width="1"><path d="M9.4 12.6 L8.6 8 Q10.4 7.4 11.8 8.2 Q13.2 7 15.2 8 L14.8 12.6"/><path d="M9.6 12.8 H14.8"/><path d="M9.8 14.2 Q5.4 17.4 5.4 21.6 Q5.6 25.4 11.4 25.6 Q15.6 25.6 17 24.4 M14.4 14.2 Q16.2 15.4 17 16.4"/><path d="M12.4 18 Q11.4 17.2 10.6 18 Q10.2 19.4 11.6 20 Q13 20.8 12.2 22.2 Q11.2 22.8 10.4 22 M11.6 16.6 V23.4"/><rect x="16.8" y="15.8" width="6.6" height="9.6" rx="1.2"/><path d="M17 18.2 H23.2 M17 20.6 H23.2 M17 23 H23.2"/></g></svg><svg style="position:absolute;left:0;top:489px" width="32" height="32" viewBox="0 0 32 32"><g fill="none" stroke="#fff" stroke-width="1.1" stroke-linejoin="round" stroke-linecap="round" stroke-width="0.95"><path d="M5.2 25.6 H23.8"/><path d="M6.4 25.4 V21.4 H9.2 V25.4 M10.6 25.4 V20.6 H15.2 V25.4 M16.8 25.4 V17.6 H19.4 V25.4 M20.4 25.4 V13 H23 V25.4"/><path d="M6 20.4 Q15 19.6 20.8 9.6"/><path d="M6.4 8.6 H10.4 M6.6 10.6 H10.6 M6.4 12.4 H8.6"/></g><path d="M19.2 9 L21.6 6.8 L23.6 9.6 Z" fill="#fff"/></svg></div></body></html>
